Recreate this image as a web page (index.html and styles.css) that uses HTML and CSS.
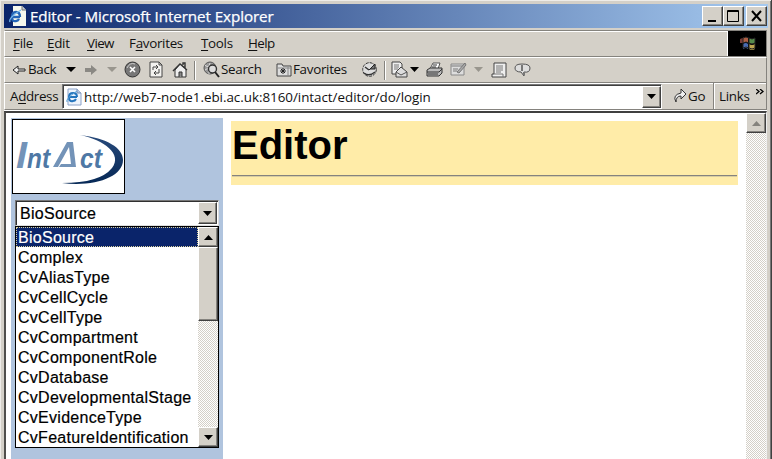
FILE: index.html
```html
<!DOCTYPE html>
<html lang="en">
<head>
<meta charset="utf-8">
<title>Editor</title>
<link rel="stylesheet" href="styles.css">
</head>
<body>
<div class="window">
  <header class="titlebar">
    <svg class="page-icon" width="20" height="20" viewBox="0 0 20 20"><path d="M6 0h9l4 4v16H6z" fill="#f6f8ee"/><path d="M15 0v4h4" fill="#c4cbd5" stroke="#777"/><path d="M13 11H5q0-5 4-5 4 0 4 5M5 11q0 5 4 4 2 0 3-2" fill="none" stroke="#2364b7" stroke-width="2.3"/><path d="M3 16Q1 12 14 4" fill="none" stroke="#75b9ed" stroke-width="1.3"/></svg>
    <h1 class="title">Editor - Microsoft Internet Explorer</h1>
    <div class="controls">
      <button class="control"><svg width="18" height="17"><path d="M4 13h8" stroke="#000" stroke-width="2"/></svg></button>
      <button class="control"><svg width="18" height="17"><path d="M2.5 2.5h11v11h-11zM2 3.5h12" fill="none" stroke="#000"/></svg></button>
      <button class="control close"><svg width="18" height="17"><path d="M4 3l9 10M13 3L4 13" stroke="#000" stroke-width="2"/></svg></button>
    </div>
  </header>
  <nav class="menubar">
    <span class="menu file"><u>F</u>ile</span><span class="menu edit"><u>E</u>dit</span><span class="menu view"><u>V</u>iew</span><span class="menu favorites">F<u>a</u>vorites</span><span class="menu tools"><u>T</u>ools</span><span class="menu help"><u>H</u>elp</span>
    <div class="throbber"><svg width="38" height="25" viewBox="0 0 38 25"><path d="M12 8l5-2v6h-5z" fill="#763c37"/><path d="M15 7q3-2 5 0v5q-2-2-5 0z" fill="#ad5e43"/><path d="M21 7q3 2 6 0v5q-3 2-6 0z" fill="#568b4a"/><path d="M15 13q3-2 5 0v5q-2-2-5 0z" fill="#496bb2"/><path d="M21 13q3 2 6 0v5q-3 2-6 0z" fill="#bda650"/><path d="M15 7q3-2 6 0t6 0v10q-3 2-6 0t-6 0zM21 7v10M15 12q3-2 6 0t6 0" fill="none" stroke="#222"/></svg></div>
  </nav>
  <div class="toolbar">
    <svg class="back-arrow" width="14" height="12"><path d="M1 6l5-4v3h7v2H6v3z" fill="#eee" stroke="#222"/></svg>
    <span class="tool-text back">Back</span>
    <svg class="caret-back" width="10" height="6"><path d="M0 0h10L5 5z"/></svg>
    <svg class="forward" width="14" height="12"><path d="M1 4h6V1l6 5-6 5V8H1z" fill="#8b8984"/></svg>
    <svg class="caret-forward" width="10" height="6"><path d="M0 0h10L5 5z" fill="#99968e"/></svg>
    <svg class="stop" width="17" height="17"><circle cx="8.5" cy="8.5" r="7.5" fill="#777" stroke="#333"/><path d="M3 7q3-6 8-4" stroke="#ccc" fill="none"/><path d="M6 6l5 5M11 6l-5 5" stroke="#fff" stroke-width="1.6"/></svg>
    <svg class="refresh" width="14" height="17"><path d="M1 1h9l3 3v12H1z" fill="#f3f2ef" stroke="#444"/><path d="M10 1v3h3M4 9V6h5M7 4l2 2-2 2M10 8v4H5M7 10l-2 2 2 2" fill="none" stroke="#444"/></svg>
    <svg class="home" width="16" height="16"><path d="M3 8v7h11V7L8 2z" fill="#eee" stroke="#333"/><path d="M1 9l7-7 7 6M11 3V1h2v5" fill="none" stroke="#333" stroke-width="1.4"/><path d="M7 15v-5h3v5" fill="#888" stroke="#333"/></svg>
    <i class="divider first"></i>
    <svg class="search" width="17" height="17"><circle cx="7" cy="7" r="6" fill="#999" stroke="#555"/><path d="M2 4q4 4 5-2M2 9q5-4 4 4" stroke="#ddd" fill="none"/><circle cx="9.5" cy="8" r="4" fill="#ddd" stroke="#333" stroke-width="1.4"/><path d="M12 11l4 5" stroke="#222" stroke-width="2"/></svg>
    <span class="tool-text search-label">Search</span>
    <svg class="fav-icon" width="16" height="14"><path d="M1 3V1h5l1 2h8v10H1z" fill="#ddd" stroke="#444"/><path d="M2 5h12M12 4v9" stroke="#888"/><path d="M7 5v6M4 8h6M5 6l4 4M9 6l-4 4" stroke="#222"/></svg>
    <span class="tool-text fav-label">Favorites</span>
    <svg class="history" width="18" height="17"><circle cx="8.5" cy="8.5" r="6.8" fill="#ddd" stroke="#333" stroke-dasharray="3 1"/><path d="M8 9l6-6v5H9" fill="#777" stroke="#222"/><path d="M8 9L4 6M3 12q5 4 11-1" fill="none" stroke="#333" stroke-width="1.5"/></svg>
    <i class="divider second"></i>
    <svg class="mail" width="28" height="17"><path d="M1 1h8l2 2v10H1z" fill="#eee" stroke="#444"/><path d="M3 4h5M3 6h5M3 8h4" stroke="#777"/><path d="M5 11l5-5 6 5v5H5z" fill="#ddd" stroke="#444"/><path d="M5 11l5 3 6-3" fill="none" stroke="#555"/><path d="M19 6h9l-4.5 5z"/></svg>
    <svg class="print" width="17" height="16"><path d="M4 7L7 1h7l-2 6" fill="#fff" stroke="#555"/><path d="M1 8l3-2h12v5l-3 3H1z" fill="#bbb" stroke="#333"/><path d="M1 10h12l3-3M2 12h10M7 3h4M6 5h4" stroke="#333" fill="none"/></svg>
    <svg class="compose" width="17" height="15"><path d="M1 2h13v11H1z" fill="#ddd" stroke="#888"/><path d="M1 4h13M3 7h5M3 9h4" stroke="#999" stroke-width="1.5"/><path d="M7 10l8-9 1 2-7 8z" fill="#aaa" stroke="#777"/></svg>
    <svg class="caret-compose" width="9" height="6"><path d="M0 0h9L4.5 5z" fill="#99968e"/></svg>
    <svg class="discuss" width="16" height="16"><path d="M3 1h12v14H1v-3h2z" fill="#eee" stroke="#444"/><path d="M5 4h7M5 6h7M5 8h7M5 10h5M3 12h9v3" fill="none" stroke="#777"/></svg>
    <svg class="messenger" width="17" height="14"><path d="M8 1q8 0 8 4 0 5-6 4v4l-3-4q-6 0-6-4 0-4 7-4" fill="#ddd" stroke="#555"/><path d="M8 2v6M10 9v3" stroke="#777" stroke-width="2"/></svg>
  </div>
  <div class="addressbar">
    <span class="address-label">A<u>d</u>dress</span>
    <div class="url-box">
      <svg class="url-icon" width="17" height="18" viewBox="0 0 17 18"><path d="M3 1h9l4 4v12H3z" fill="#eef4fc" stroke="#8ba2c8"/><path d="M12 1v4h4" fill="#bac9e2" stroke="#7790b5"/><path d="M12 9H4q0-4 4-4 4 0 4 4M4 9q0 5 4 4 2 0 3-2" fill="none" stroke="#2475bd" stroke-width="2"/><path d="M2 14Q0 11 12 3" fill="none" stroke="#57a0d8"/></svg>
      <span class="url">http://web7-node1.ebi.ac.uk:8160/intact/editor/do/login</span>
      <button class="drop"><svg width="9" height="5"><path d="M0 0h9L4.5 5z"/></svg></button>
    </div>
    <svg class="go-icon" width="14" height="16"><path d="M3 14Q-1 7 8 5V1l5 5-5 5V8q-5 0-5 6z" fill="#eee" stroke="#333"/></svg>
    <span class="go">Go</span>
    <span class="links">Links</span>
    <svg class="chevrons" width="8" height="6"><path d="M0 0l3 2.5L0 5M4 0l3 2.5L4 5" fill="none" stroke="#000" stroke-width="1.3"/></svg>
  </div>
  <main class="viewport">
    <aside class="sidebar">
      <div class="logo"><svg width="111" height="73" viewBox="0 0 111 73">
        <defs><linearGradient id="swoosh" x2="0" y2="1"><stop stop-color="#284a7b"/><stop offset="1" stop-color="#062856"/></linearGradient></defs>
        <path d="M67 15C94 18 110 28 110 40C110 57 82 67 49 63Q87 63 99 48C110 34 91 20 67 15z" fill="url(#swoosh)"/>
        <g class="logo-word"><text x="3" y="48" class="initial" textLength="11" lengthAdjust="spacingAndGlyphs">I</text><text x="14" y="48" class="letters" textLength="23" lengthAdjust="spacingAndGlyphs">nt</text><text x="67" y="48" class="letters" textLength="22" lengthAdjust="spacingAndGlyphs">ct</text></g>
        <path d="M40 47L54 22h6l3 25H46l2-3h10L56 27 45 47z" fill="#7393b8"/>
      </svg></div>
      <div class="select"><span>BioSource</span><button class="drop"><svg width="9" height="5"><path d="M0 0h9L4.5 5z"/></svg></button></div>
      <div class="listbox">
        <ul class="options"><li class="selected">BioSource</li><li>Complex</li><li>CvAliasType</li><li>CvCellCycle</li><li>CvCellType</li><li>CvCompartment</li><li>CvComponentRole</li><li>CvDatabase</li><li>CvDevelopmentalStage</li><li>CvEvidenceType</li><li>CvFeatureIdentification</li></ul>
        <div class="scroll"><button class="arrow"><svg width="9" height="5"><path d="M0 5h9L4.5 0z"/></svg></button><div class="thumb"></div><button class="arrow last"><svg width="9" height="5"><path d="M0 0h9L4.5 5z"/></svg></button></div>
      </div>
    </aside>
    <section class="content"><div class="banner"><h2>Editor</h2><hr></div></section>
    <div class="page-scroll"><button class="arrow"><svg width="9" height="5"><path d="M0 5h9L4.5 0z" fill="#85837e"/></svg></button></div>
  </main>
</div>
</body>
</html>
```
FILE: styles.css
```css
* { box-sizing: border-box; }
body { margin: 0; overflow: hidden; font: 14px/18px "Open Sans", sans-serif; color: #111; }
svg { display: block; flex: none; }
u { text-underline-offset: 2px; text-decoration-thickness: 1px; text-decoration-skip-ink: none; }
button { margin: 0; padding: 0; display: flex; align-items: center; justify-content: center; flex: none; background: #d4d0c8; border: 1px solid; border-color: #fff #404040 #404040 #fff; box-shadow: inset -1px -1px #85837e; }

.window { height: 459px; padding: 4px 3px 0 4px; background: #d4d0c8; border-right: 1px solid #404040; box-shadow: inset 1px 1px #eeece8, inset -1px 0 #777; }
.titlebar { width: 764px; height: 24px; display: flex; align-items: center; padding-left: 3px; background: linear-gradient(90deg, #0a246a, #a6caf0); }
.title { margin: 0 0 0 3px; font: 15.2px/22px "Open Sans", sans-serif; letter-spacing: -.08px; color: #fff; white-space: nowrap; width: 246px; -webkit-text-stroke: .25px #fff; }
.controls { margin-left: auto; margin-right: 1px; display: flex; }
.control { width: 21px; height: 20px; }
.close { margin-left: 2px; }

.menubar { height: 27px; margin-top: 2px; width: 763px; border: 1px solid #85837e; border-left-color: #fff; border-top-color: #85837e; box-shadow: inset 0 1px #fff; display: flex; align-items: center; padding-left: 8px; white-space: nowrap; }
.menu { flex: none; }
.file { width: 34px; } .edit { width: 40px; } .view { width: 42px; } .favorites { width: 72px; } .tools { width: 47px; } .help { width: 40px; }
.menu, .tool-text, .address-label, .go, .links { font-size: 13.4px; letter-spacing: -.3px; }
.menu { position: relative; top: -1px; }
.view, .help { letter-spacing: -.6px; }
.throbber { margin-left: auto; background: #000; border-left: 1px solid #fff; height: 25px; width: 39px; }

.toolbar { height: 25px; width: 763px; display: flex; align-items: center; padding-left: 7px; border-top: 1px solid #fff; border-right: 1px solid #85837e; border-left: 1px solid #fff; white-space: nowrap; }
.toolbar > * { flex: none; }
.tool-text { margin-top: -2px; }
.toolbar > svg { margin-top: -1px; }
.back { width: 38px; margin-left: 2px; }
.forward { margin-left: 8px; }
.caret-forward { margin-left: 9px; }
.stop { margin-left: 7px; }
.refresh { margin-left: 8px; }
.home { margin-left: 9px; }
.divider { width: 2px; height: 19px; background: #85837e; border-right: 1px solid #fff; }
.first { margin-left: 6px; }
.search { margin-left: 7px; }
.search-label { width: 44px; margin-left: 1px; }
.fav-icon { margin-left: 11px; }
.fav-label { width: 57px; margin-left: 1px; }
.history { margin-left: 11px; }
.second { margin-left: 5px; }
.mail { margin-left: 5px; }
.print { margin-left: 7px; }
.compose { margin-left: 7px; }
.caret-compose { margin-left: 7px; }
.discuss { margin-left: 8px; }
.messenger { margin-left: 7px; }

.addressbar { height: 28px; width: 763px; border: 1px solid #85837e; border-left-color: #fff; box-shadow: inset 0 1px #fff, 0 1px #fff; display: flex; align-items: center; padding-left: 5px; white-space: nowrap; }
.address-label { width: 52px; letter-spacing: -.35px; }
.url-box { width: 600px; height: 25px; border: 1px solid #777; border-right-color: #fff; border-bottom-color: #fff; box-shadow: inset 1px 1px #404040; background: #fff; display: flex; align-items: center; padding: 1px 0 0 2px; }
.url { margin-left: 2px; font-size: 13.4px; letter-spacing: -.03px; }
.drop { width: 19px; height: 22px; margin-left: auto; }
.go-icon { margin-left: 11px; }
.go { width: 26px; margin-left: 1px; border-right: 1px solid #85837e; height: 26px; line-height: 26px; }
.links { width: 36px; padding-left: 4px; height: 26px; line-height: 26px; border-left: 1px solid #fff; }
.chevrons { margin: 0 2px 9px auto; }

.viewport { height: 348px; margin-top: 1px; width: 763px; display: flex; background: #fff; border-top: 2px solid #404040; border-left: 2px solid #504f4c; border-right: 1px solid #eee; }
.sidebar { width: 212px; height: 341px; margin: 5px 0 0 5px; background: #b0c4de; padding: 1px 0 0 1px; flex: none; }
.logo { width: 113px; height: 75px; border: 1px solid #000; background: #fff; }
.logo-word { font-family: "Liberation Sans", sans-serif; font-weight: bold; font-style: italic; fill: #4e78a5; }
.initial { font-size: 37px; fill: #7393b8; }
.letters { font-size: 28px; }
.select { width: 204px; height: 26px; margin: 6px 0 0 3px; background: #fff; border: 1px solid #777; border-right-color: #ddd; border-bottom-color: #ddd; box-shadow: inset 1px 1px #303030; padding: 1px 1px 1px 4px; display: flex; align-items: center; }
.select span { padding-top: 1px; }
.select, .listbox { font: 16px/22px "Liberation Sans", sans-serif; color: #000; letter-spacing: .27px; -webkit-text-stroke: .2px; }
.listbox { width: 204px; height: 222px; margin-left: 3px; border: 1px solid #000; background: #fff; display: flex; }
.options { list-style: none; margin: 0; padding: 0; width: 182px; }
.options li { height: 20px; padding-left: 2px; white-space: nowrap; }
.options .selected { background: #0a246a; color: #fff; outline: 1px dotted #d8cf9d; outline-offset: -1px; }
.scroll, .page-scroll { width: 20px; background: repeating-conic-gradient(#d4d0c8 0 25%, #fff 0 50%) 0 0 / 2px 2px; display: flex; flex-direction: column; }
.arrow { width: 20px; height: 20px; }
.thumb { height: 74px; background: #d4d0c8; border: 1px solid; border-color: #fff #404040 #404040 #fff; box-shadow: inset -1px -1px #85837e; }
.last { margin-top: auto; }
.content { flex: 1; padding: 8px 8px 0; }
.banner { height: 64px; background: #ffeca8; padding: 0 1px; }
h2 { margin: 0; font: bold 40px/48px "Liberation Sans", sans-serif; color: #000; }
hr { margin: 6px 0 0; border: 0; height: 2px; border-top: 1px solid #85837e; border-bottom: 1px solid #d9cda0; }
.page-scroll { flex: none; }
```
